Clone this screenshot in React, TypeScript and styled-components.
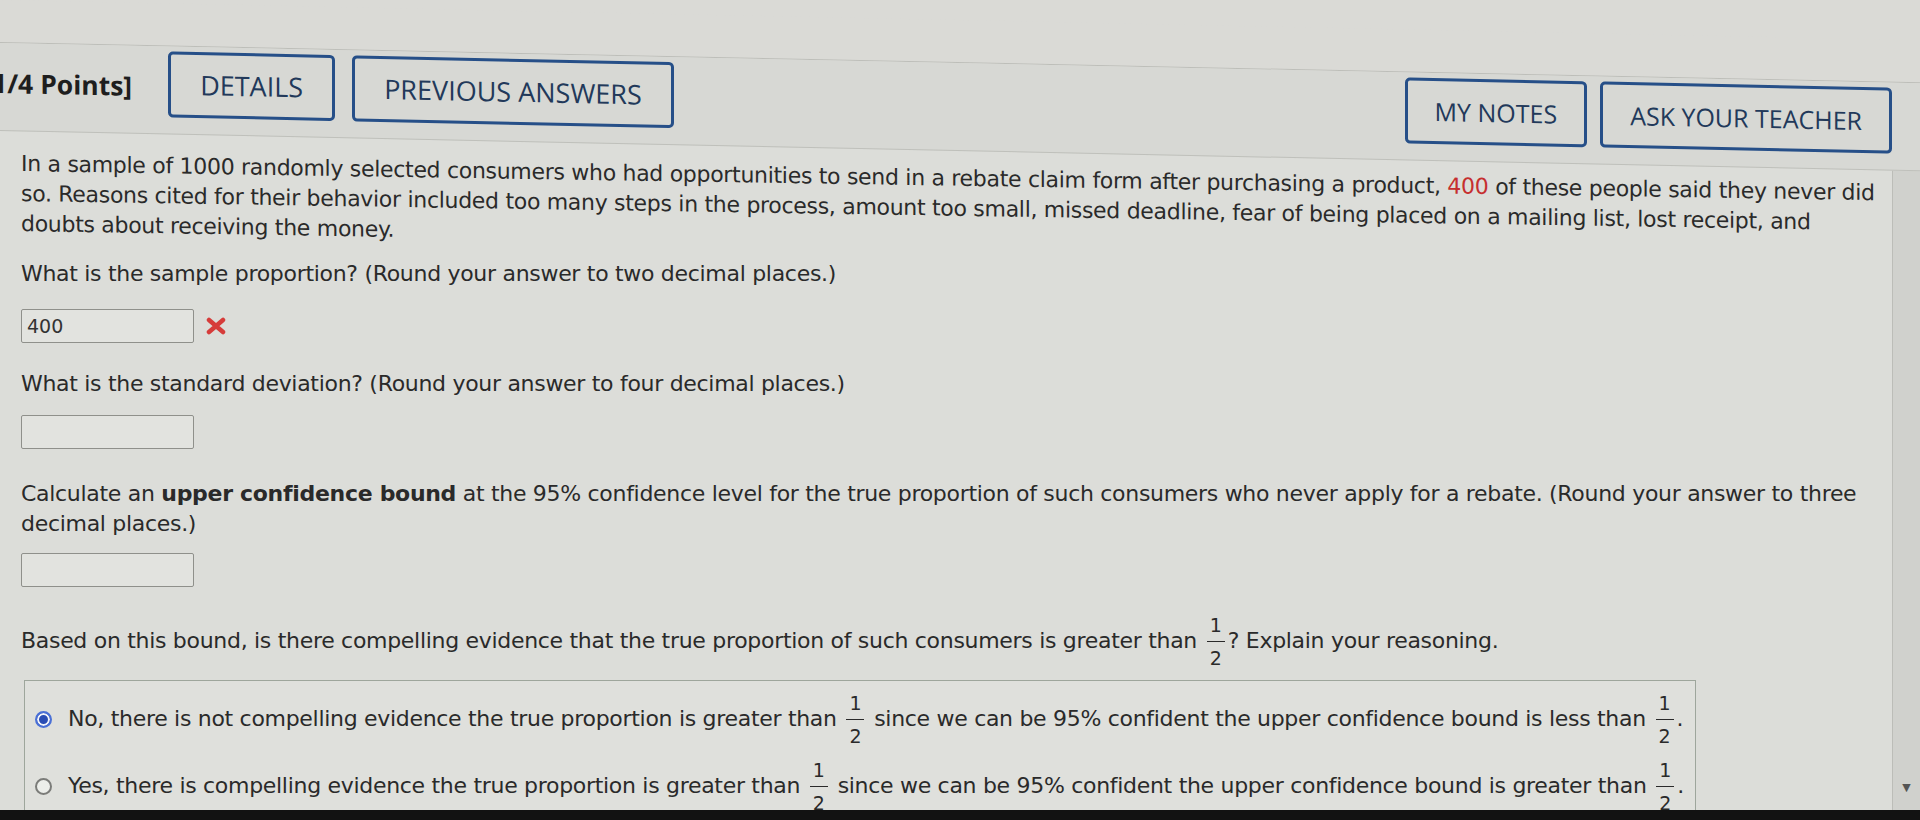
import styled, { createGlobalStyle } from "styled-components";

const GlobalStyle = createGlobalStyle`
  html, body {
    margin: 0;
    padding: 0;
    background: #dadad6;
  }
  body {
    font-family: "DejaVu Sans", Verdana, sans-serif;
    color: #2a2a2a;
  }
`;

const Screen = styled.div`
  position: relative;
  width: 1920px;
  height: 820px;
  overflow: hidden;
  background: #dadad6;
  display: flex;
  flex-direction: column;
`;

// the reference is a photo of a monitor: its upper part leans a little
const Masthead = styled.header`
  flex-shrink: 0;
  transform: skewY(1.2deg);
  transform-origin: 0 0;
`;

const TopStrip = styled.div`
  height: 42px;
  background: #dadad6;
  border-bottom: 1px solid #bdbeb9;
`;

const Toolbar = styled.div`
  height: 88px;
  display: flex;
  align-items: center;
  justify-content: space-between;
  padding: 0 28px 12px 0;
  box-sizing: border-box;
  background: #d7d8d4;
  border-bottom: 1px solid #bfc0bb;
`;

const ButtonGroup = styled.div<{ $gap: number }>`
  display: flex;
  align-items: center;
  gap: ${(p) => p.$gap}px;
`;

const PointsLabel = styled.span`
  font-family: "Open Sans", "Liberation Sans", sans-serif;
  font-weight: 700;
  font-size: 26.5px;
  color: #1e1e1e;
  margin-left: -8px;
  margin-right: 19px;
  padding-top: 4px;
`;

const ActionButton = styled.button<{ $size: number }>`
  height: 66px;
  padding: 0 ${(p) => p.$size + 2}px;
  box-sizing: border-box;
  border: 3px solid #264f88;
  border-radius: 5px;
  background: transparent;
  font-family: "Open Sans", "Liberation Sans", sans-serif;
  font-size: ${(p) => p.$size}px;
  color: #22395a;
  cursor: pointer;
`;

const Body = styled.div`
  flex: 1;
  display: flex;
`;

const Panel = styled.div`
  flex: 1;
  background: #dcddd9;
  border-right: 1px solid #bcbdb8;
  padding: 18px 10px 0 21px;
`;

const Gutter = styled.div`
  width: 27px;
  background: #d0d1cd;
  display: flex;
  flex-direction: column;
  align-items: center;
  padding-top: 650px;
  box-sizing: border-box;
  font-size: 11px;
  color: #555;
`;

const Text = styled.p<{ $top?: number }>`
  margin: ${(p) => p.$top ?? 0}px 0 0;
  font-size: 22px;
  line-height: 30px;
  letter-spacing: -0.3px;
`;

const Intro = styled(Text)`
  transform: skewY(0.9deg);
  transform-origin: 0 0;
`;

const Given = styled.span`
  color: #c62f2f;
`;

const FieldRow = styled.div<{ $top: number }>`
  display: flex;
  align-items: center;
  gap: 12px;
  margin-top: ${(p) => p.$top}px;
`;

const AnswerField = styled.input`
  width: 173px;
  height: 34px;
  box-sizing: border-box;
  border: 1px solid #8f908b;
  border-radius: 2px;
  background: #e2e3df;
  padding: 0 5px;
  font-family: "DejaVu Sans", Verdana, sans-serif;
  font-size: 19px;
  color: #333;
  outline: none;
`;

const Frac = styled.span`
  display: inline-flex;
  flex-direction: column;
  align-items: center;
  vertical-align: middle;
  font-size: 19px;
  line-height: 22px;
  margin: 0 3px;
  letter-spacing: 0;
`;

const Num = styled.span`
  padding: 0 3px 5px;
  border-bottom: 1.5px solid currentColor;
`;

const Den = styled.span`
  padding-top: 5px;
`;

const ChoiceBox = styled.div`
  margin: 11px 0 0 3px;
  width: 1660px;
  background: #dfe0dc;
  border: 1px solid #9ea69c;
  padding: 11px 0 0 10px;
  display: flex;
  flex-direction: column;
  gap: 12px;
`;

const ChoiceRow = styled.label`
  display: flex;
  align-items: center;
  gap: 16px;
  font-size: 22px;
  line-height: 30px;
  letter-spacing: -0.3px;
  cursor: pointer;
`;

const Radio = styled.span<{ $checked?: boolean }>`
  width: 17px;
  height: 17px;
  flex-shrink: 0;
  box-sizing: border-box;
  border-radius: 50%;
  border: 2px solid ${(p) => (p.$checked ? "#4a70d6" : "#7b7c79")};
  background: ${(p) => (p.$checked ? "#2a4db4" : "#eceeea")};
  box-shadow: ${(p) => (p.$checked ? "inset 0 0 0 2px #f2f4fa" : "none")};
`;

const Bezel = styled.div`
  position: absolute;
  left: 0;
  right: 0;
  bottom: 0;
  height: 10px;
  background: #121212;
`;

function Half() {
  return (
    <Frac>
      <Num>1</Num>
      <Den>2</Den>
    </Frac>
  );
}

function WrongMark() {
  return (
    <svg width="20" height="18" viewBox="0 0 20 18">
      <path d="M3 3 L17 15 M17 3 L3 15" stroke="#d63c3a" strokeWidth="4.5" strokeLinecap="round" />
    </svg>
  );
}

export default function App() {
  return (
    <Screen>
      <GlobalStyle />
      <Masthead>
        <TopStrip />
        <Toolbar>
          <ButtonGroup $gap={17}>
            <PointsLabel>1/4 Points]</PointsLabel>
            <ActionButton $size={27}>DETAILS</ActionButton>
            <ActionButton $size={27}>PREVIOUS ANSWERS</ActionButton>
          </ButtonGroup>
          <ButtonGroup $gap={13}>
            <ActionButton $size={25}>MY NOTES</ActionButton>
            <ActionButton $size={25}>ASK YOUR TEACHER</ActionButton>
          </ButtonGroup>
        </Toolbar>
      </Masthead>
      <Body>
        <Panel>
          <Intro>
            In a sample of 1000 randomly selected consumers who had opportunities to send in a rebate claim form
            after purchasing a product, <Given>400</Given> of these people said they never did so. Reasons cited
            for their behavior included too many steps in the process, amount too small, missed deadline, fear of
            being placed on a mailing list, lost receipt, and doubts about receiving the money.
          </Intro>

          <Text $top={20}>What is the sample proportion? (Round your answer to two decimal places.)</Text>
          <FieldRow $top={20}>
            <AnswerField defaultValue="400" readOnly />
            <WrongMark />
          </FieldRow>

          <Text $top={26}>What is the standard deviation? (Round your answer to four decimal places.)</Text>
          <FieldRow $top={16}>
            <AnswerField />
          </FieldRow>

          <Text $top={30}>
            Calculate an <b>upper confidence bound</b> at the 95% confidence level for the true proportion of such
            consumers who never apply for a rebate. (Round your answer to three decimal places.)
          </Text>
          <FieldRow $top={14}>
            <AnswerField />
          </FieldRow>

          <Text $top={27}>
            Based on this bound, is there compelling evidence that the true proportion of such consumers is greater
            than <Half />? Explain your reasoning.
          </Text>

          <ChoiceBox>
            <ChoiceRow>
              <Radio $checked />
              <span>
                No, there is not compelling evidence the true proportion is greater than <Half /> since we can be
                95% confident the upper confidence bound is less than <Half />.
              </span>
            </ChoiceRow>
            <ChoiceRow>
              <Radio />
              <span>
                Yes, there is compelling evidence the true proportion is greater than <Half /> since we can be 95%
                confident the upper confidence bound is greater than <Half />.
              </span>
            </ChoiceRow>
          </ChoiceBox>
        </Panel>
        <Gutter>▼</Gutter>
      </Body>
      <Bezel />
    </Screen>
  );
}
